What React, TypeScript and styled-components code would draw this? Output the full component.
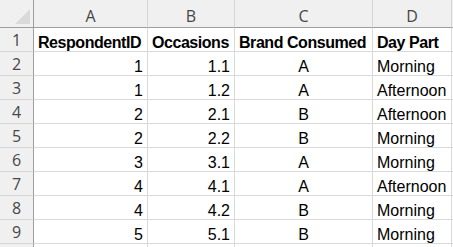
import React from "react";
import styled, { createGlobalStyle } from "styled-components";

type Align = "left" | "center" | "right";

interface Row {
  id: string;
  occasion: string;
  brand: string;
  dayPart: string;
}

const rows: Row[] = [
  { id: "1", occasion: "1.1", brand: "A", dayPart: "Morning" },
  { id: "1", occasion: "1.2", brand: "A", dayPart: "Afternoon" },
  { id: "2", occasion: "2.1", brand: "B", dayPart: "Afternoon" },
  { id: "2", occasion: "2.2", brand: "B", dayPart: "Morning" },
  { id: "3", occasion: "3.1", brand: "A", dayPart: "Morning" },
  { id: "4", occasion: "4.1", brand: "A", dayPart: "Afternoon" },
  { id: "4", occasion: "4.2", brand: "B", dayPart: "Morning" },
  { id: "5", occasion: "5.1", brand: "B", dayPart: "Morning" },
];

const columns = ["A", "B", "C", "D"];

const GlobalStyle = createGlobalStyle`
  html, body {
    margin: 0;
    padding: 0;
    background: #ffffff;
    overflow: hidden;
  }
`;

const Sheet = styled.div`
  display: grid;
  grid-template-columns: 34px 114px 87px 138px 79px 1fr;
  grid-auto-rows: 24px;
  grid-template-rows: 28px;
  width: 453px;
  height: 247px;
  overflow: hidden;
  font-family: "Liberation Sans", Arial, sans-serif;
  color: #000;
`;

const Corner = styled.div`
  position: relative;
  background: #f0f0f0;
  border-right: 1px solid #9e9e9e;
  border-bottom: 1px solid #9e9e9e;
  box-sizing: border-box;

  &::after {
    content: "";
    position: absolute;
    right: 3px;
    bottom: 3px;
    width: 0;
    height: 0;
    border-left: 15px solid transparent;
    border-bottom: 15px solid #dadada;
  }
`;

const HeaderLabel = styled.div`
  display: flex;
  justify-content: center;
  box-sizing: border-box;
  line-height: 18px;
  background: #f0f0f0;
  font-family: "Open Sans", "Noto Sans", sans-serif;
  font-size: 16px;
  color: #474747;
`;

const ColHeader = styled(HeaderLabel)`
  padding-top: 7px;
  border-right: 1px solid #d6d6d6;
  border-bottom: 1px solid #9e9e9e;
`;

const RowHeader = styled(HeaderLabel)`
  padding-top: 3px;
  border-right: 1px solid #9e9e9e;
  border-bottom: 1px solid #d6d6d6;
`;

const Cell = styled.div<{ $align?: Align; $bold?: boolean }>`
  box-sizing: border-box;
  padding: 6px 4px 0 4px;
  line-height: 17px;
  font-size: 16px;
  white-space: nowrap;
  overflow: hidden;
  text-align: ${(p) => p.$align || "left"};
  font-weight: ${(p) => (p.$bold ? 700 : 400)};
  letter-spacing: ${(p) => (p.$bold ? "-0.45px" : "0")};
  border-right: 1px solid #d9d9d9;
  border-bottom: 1px solid #d9d9d9;
`;

const App: React.FC = () => {
  return (
    <>
      <GlobalStyle />
      <Sheet>
        <Corner />
        {columns.map((c) => (
          <ColHeader key={c}>{c}</ColHeader>
        ))}
        <ColHeader />

        <RowHeader>1</RowHeader>
        <Cell $bold>RespondentID</Cell>
        <Cell $bold>Occasions</Cell>
        <Cell $bold>Brand Consumed</Cell>
        <Cell $bold>Day Part</Cell>
        <Cell />

        {rows.map((r, i) => (
          <React.Fragment key={i}>
            <RowHeader>{i + 2}</RowHeader>
            <Cell $align="right">{r.id}</Cell>
            <Cell $align="right">{r.occasion}</Cell>
            <Cell $align="center">{r.brand}</Cell>
            <Cell>{r.dayPart}</Cell>
            <Cell />
          </React.Fragment>
        ))}

        {/* partly visible row below the data */}
        <RowHeader />
        <Cell />
        <Cell />
        <Cell />
        <Cell />
        <Cell />
      </Sheet>
    </>
  );
};

export default App;
